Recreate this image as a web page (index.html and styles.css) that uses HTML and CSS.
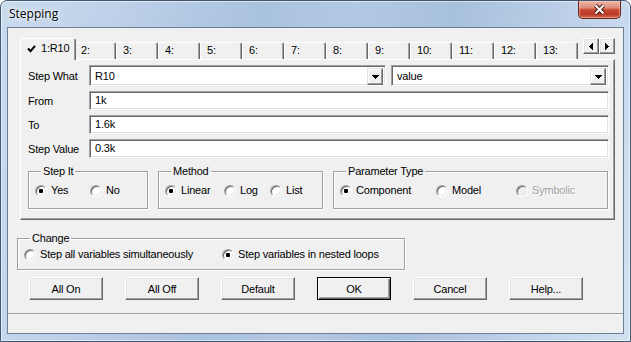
FILE: index.html
```html
<!DOCTYPE html>
<html lang="en">
<head>
    <meta charset="UTF-8">
    <title>Stepping</title>
    <link rel="stylesheet" href="styles.css">
</head>
<body>
    <div class="window">
        <div class="titlebar">
            <span class="title">Stepping</span>
            <button class="close-button" aria-label="Close">
                <svg width="13" height="11" viewBox="0 0 13 11">
                    <path d="M2.5 1.5 L10.5 9.5 M10.5 1.5 L2.5 9.5" stroke="#4d1610" stroke-width="4"/>
                    <path d="M2.5 1.5 L10.5 9.5 M10.5 1.5 L2.5 9.5" stroke="#ffffff" stroke-width="2"/>
                </svg>
            </button>
        </div>

        <div class="client">
            <!-- Tabs -->
            <div class="tab-strip">
                <div class="tab active">
                    <svg class="check" width="9" height="8" viewBox="0 0 9 8">
                        <polyline points="1,3.5 3.5,6.2 8,0.8" fill="none" stroke="#000" stroke-width="2"/>
                    </svg>1:R10
                </div>
                <div class="tab">2:</div>
                <div class="tab">3:</div>
                <div class="tab">4:</div>
                <div class="tab">5:</div>
                <div class="tab">6:</div>
                <div class="tab">7:</div>
                <div class="tab">8:</div>
                <div class="tab">9:</div>
                <div class="tab">10:</div>
                <div class="tab">11:</div>
                <div class="tab">12:</div>
                <div class="tab">13:</div>
                <div class="tab-scroll">
                    <span class="small-button">
                        <svg width="4" height="7" viewBox="0 0 4 7"><path d="M0 3h1v1H0zM1 2h1v3H1zM2 1h1v5H2zM3 0h1v7H3z"/></svg>
                    </span>
                    <span class="small-button">
                        <svg width="4" height="7" viewBox="0 0 4 7"><path d="M3 3h1v1H3zM2 2h1v3H2zM1 1h1v5H1zM0 0h1v7H0z"/></svg>
                    </span>
                </div>
            </div>

            <div class="tab-panel">
                <div class="field-row">
                    <span class="field-label">Step What</span>
                    <div class="combo combo-what">
                        <span class="combo-text">R10</span>
                        <span class="combo-button">
                            <svg width="7" height="4" viewBox="0 0 7 4"><path d="M0 0h7v1H0zM1 1h5v1H1zM2 2h3v1H2zM3 3h1v1H3z"/></svg>
                        </span>
                    </div>
                    <div class="combo combo-param">
                        <span class="combo-text">value</span>
                        <span class="combo-button">
                            <svg width="7" height="4" viewBox="0 0 7 4"><path d="M0 0h7v1H0zM1 1h5v1H1zM2 2h3v1H2zM3 3h1v1H3z"/></svg>
                        </span>
                    </div>
                </div>
                <div class="field-row">
                    <span class="field-label">From</span>
                    <div class="edit">1k</div>
                </div>
                <div class="field-row">
                    <span class="field-label">To</span>
                    <div class="edit">1.6k</div>
                </div>
                <div class="field-row">
                    <span class="field-label">Step Value</span>
                    <div class="edit">0.3k</div>
                </div>

                <div class="group-row">
                    <fieldset class="group group-stepit">
                        <legend>Step It</legend>
                        <div class="options">
                            <label class="option"><span class="radio checked"></span>Yes</label>
                            <label class="option"><span class="radio"></span>No</label>
                        </div>
                    </fieldset>
                    <fieldset class="group group-method">
                        <legend>Method</legend>
                        <div class="options">
                            <label class="option"><span class="radio checked"></span>Linear</label>
                            <label class="option"><span class="radio"></span>Log</label>
                            <label class="option"><span class="radio"></span>List</label>
                        </div>
                    </fieldset>
                    <fieldset class="group group-ptype">
                        <legend>Parameter Type</legend>
                        <div class="options">
                            <label class="option"><span class="radio checked"></span>Component</label>
                            <label class="option"><span class="radio"></span>Model</label>
                            <label class="option disabled"><span class="radio"></span>Symbolic</label>
                        </div>
                    </fieldset>
                </div>
            </div>

            <fieldset class="group group-change">
                <legend>Change</legend>
                <div class="options">
                    <label class="option"><span class="radio"></span>Step all variables simultaneously</label>
                    <label class="option"><span class="radio checked"></span>Step variables in nested loops</label>
                </div>
            </fieldset>

            <div class="button-row">
                <button class="push-button">All On</button>
                <button class="push-button">All Off</button>
                <button class="push-button">Default</button>
                <button class="push-button default">OK</button>
                <button class="push-button">Cancel</button>
                <button class="push-button">Help...</button>
            </div>

            <div class="status-bar"></div>
        </div>
    </div>
</body>
</html>
```

FILE: styles.css
```css
* {
    margin: 0;
    padding: 0;
    box-sizing: border-box;
}

body {
    width: 631px;
    height: 342px;
    overflow: hidden;
    background: #ffffff;
    font-family: "Liberation Sans", Arial, sans-serif;
    font-size: 11px;
    letter-spacing: -0.2px;
    color: #000000;
}

/* Aero window frame */
.window {
    width: 631px;
    height: 342px;
    display: flex;
    flex-direction: column;
    border: 1px solid #43566f;
    border-radius: 7px 7px 0 0;
    background: linear-gradient(100deg, #c9dbee 0%, #bcd0e8 18%, #a9c2de 38%, #b2c9e3 52%, #a7c0dc 66%, #bed2e9 84%, #d2e2f2 100%);
    box-shadow: inset 0 0 0 1px rgba(255, 255, 255, 0.55);
}

.titlebar {
    height: 26px;
    flex-shrink: 0;
    display: flex;
    justify-content: space-between;
    align-items: flex-start;
}

.title {
    padding: 5px 0 0 8px;
    font-family: "Open Sans", "Noto Sans", sans-serif;
    font-size: 12px;
    line-height: 16px;
    letter-spacing: 0;
    text-shadow: 0 0 6px #ffffff, 0 0 3px #ffffff;
}

.close-button {
    width: 43px;
    height: 18px;
    margin-right: 9px;
    display: flex;
    justify-content: center;
    align-items: center;
    border: 1px solid #6a241a;
    border-top: none;
    border-radius: 0 0 5px 5px;
    background: linear-gradient(#ecb6a8 0%, #dd8d7a 40%, #c94a33 52%, #bb3b26 78%, #d46b50 100%);
    box-shadow: inset 0 0 0 1px rgba(255, 210, 200, 0.45);
}

/* Client area */
.client {
    flex: 1;
    margin: 0 6px 7px;
    border: 1px solid #6d7f97;
    background: #f0f0f0;
    display: flex;
    flex-direction: column;
}

.tab-strip {
    height: 21px;
    margin: 10px 8px 0 14px;
    display: flex;
    align-items: flex-end;
}

.tab {
    width: 42px;
    height: 17px;
    padding: 1px 0 0 6px;
    line-height: 13px;
    border-top: 1px solid #ffffff;
    border-left: 1px solid #ffffff;
    border-right: 1px solid #696969;
    border-radius: 2px 2px 0 0;
    box-shadow: inset -1px 0 #a0a0a0;
    white-space: nowrap;
}

.tab.active {
    width: 56px;
    height: 22px;
    margin: 0 -2px -1px;
    padding-top: 3px;
    position: relative;
    z-index: 1;
    background: #f0f0f0;
    display: flex;
    align-items: flex-start;
}

.check {
    margin: 3px 5px 0 0;
}

.tab-scroll {
    align-self: flex-start;
    margin-left: auto;
    display: flex;
}

.small-button {
    width: 16px;
    height: 16px;
    display: flex;
    justify-content: center;
    align-items: center;
    border: 1px solid;
    border-color: #ffffff #696969 #696969 #ffffff;
    box-shadow: inset -1px -1px #a0a0a0, inset 1px 1px #e3e3e3;
}

.tab-panel {
    height: 161px;
    margin: 0 8px 0 12px;
    padding: 5px 5px 0 7px;
    border: 1px solid;
    border-color: #ffffff #696969 #696969 #ffffff;
    box-shadow: inset -1px -1px #a0a0a0;
}

.field-row {
    display: flex;
    align-items: center;
    margin-bottom: 5px;
}

.field-label {
    width: 61px;
    flex-shrink: 0;
}

.combo,
.edit {
    background: #ffffff;
    border: 1px solid;
    border-color: #a0a0a0 #ffffff #ffffff #a0a0a0;
    box-shadow: inset 1px 1px #696969, inset -1px -1px #e3e3e3;
}

.combo {
    height: 21px;
    padding: 2px;
    display: flex;
}

.combo-what {
    width: 297px;
}

.combo-param {
    flex: 1;
    margin-left: 5px;
}

.combo-text {
    flex: 1;
    padding-left: 3px;
    line-height: 17px;
}

.combo-button {
    width: 16px;
    height: 17px;
    display: flex;
    justify-content: center;
    align-items: center;
    background: #f0f0f0;
    border: 1px solid;
    border-color: #e3e3e3 #696969 #696969 #e3e3e3;
    box-shadow: inset -1px -1px #a0a0a0, inset 1px 1px #ffffff;
}

.edit {
    flex: 1;
    height: 19px;
    padding-left: 5px;
    line-height: 17px;
}

/* Group boxes */
.group-row {
    display: flex;
    gap: 10px;
    margin-top: 7px;
}

.group {
    min-width: 0;
    border: 1px solid #a0a0a0;
    box-shadow: inset 1px 1px #ffffff, 1px 1px #ffffff;
    padding: 6px 6px 11px;
}

.group legend {
    margin-left: 6px;
    padding: 0 2px;
    line-height: 13px;
    background: #f0f0f0;
}

.group-stepit { width: 120px; }
.group-method { width: 165px; }
.group-ptype { width: 275px; }

.options {
    display: grid;
    align-items: center;
    height: 13px;
}

.group-stepit .options { grid-template-columns: 55px auto; }
.group-method .options { grid-template-columns: 59px 46px auto; }
.group-ptype .options { grid-template-columns: 96px 80px auto; }
.group-change .options { grid-template-columns: 198px auto; }

.option {
    display: flex;
    align-items: center;
    gap: 4px;
    white-space: nowrap;
    line-height: 13px;
}

.radio {
    width: 12px;
    height: 12px;
    flex-shrink: 0;
    border-radius: 50%;
    border: 1px solid;
    border-color: #a0a0a0 #ffffff #ffffff #a0a0a0;
    box-shadow: inset 1px 1px #696969, inset -1px -1px #e3e3e3;
    background: #ffffff;
}

.radio.checked {
    background: radial-gradient(circle, #000000 0, #000000 2px, #ffffff 2.5px);
}

.option.disabled {
    color: #a0a0a0;
    text-shadow: 1px 1px #ffffff;
}

.option.disabled .radio {
    background: #f0f0f0;
}

.group-change {
    width: 388px;
    margin: 12px 0 0 9px;
    padding: 3px 6px 8px;
}

/* Bottom buttons */
.button-row {
    display: flex;
    gap: 22px;
    margin: 7px 0 0 21px;
}

.push-button {
    width: 74px;
    height: 23px;
    font-family: "Liberation Sans", Arial, sans-serif;
    font-size: 11px;
    letter-spacing: -0.2px;
    color: #000000;
    background: #f0f0f0;
    border: 1px solid;
    border-color: #ffffff #696969 #696969 #ffffff;
    box-shadow: inset -1px -1px #a0a0a0, inset 1px 1px #e3e3e3;
}

.push-button.default {
    border-color: #000000;
    box-shadow: inset 1px 1px #ffffff, inset -1px -1px #696969, inset -2px -2px #a0a0a0;
}

.status-bar {
    margin-top: auto;
    height: 20px;
    border-top: 1px solid #a0a0a0;
}
```
